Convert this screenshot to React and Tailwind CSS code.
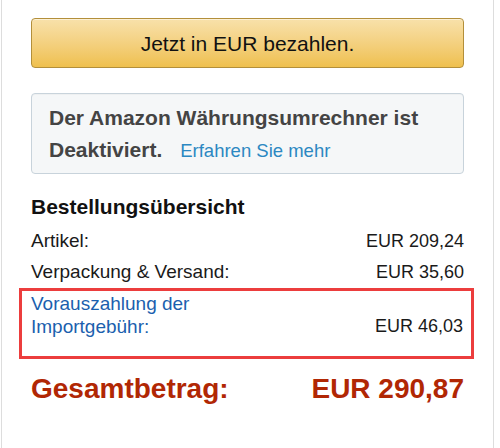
export default function App() {
  return (
    <div className="w-[500px] h-[448px] bg-white overflow-hidden" style={{ fontFamily: '"Liberation Sans", Arial, Helvetica, sans-serif' }}>
      <div className="ml-[1px] w-[493px] h-full border-x border-[#dddddd] px-[29px] pt-[18px]">
        <button className="w-full h-[50px] rounded-[4px] border border-[#b38f3a] bg-gradient-to-b from-[#f8e1aa] to-[#efc04d] text-[21px] text-[#111] shadow-[inset_0_1px_0_rgba(255,255,255,0.5)] leading-none">
          Jetzt in EUR bezahlen.
        </button>

        <div className="mt-[25px] rounded-[4px] border border-[#c8d3db] bg-[#f5f7f8] pl-[17px] pr-[10px] pt-[8px] pb-[6px] shadow-[inset_0_1px_1px_rgba(0,0,0,0.03)]">
          <p className="text-[21px] leading-[32px] font-bold text-[#444]">
            Der Amazon Währungsumrechner ist Deaktiviert.
            <span className="ml-[18px] text-[18.5px] font-normal text-[#2c88c2]">Erfahren Sie mehr</span>
          </p>
        </div>

        <h2 className="mt-[19px] text-[21px] leading-[28px] font-bold text-[#111]">Bestellungsübersicht</h2>

        <div className="mt-[5px] text-[#1a1a1a]">
          <div className="flex justify-between items-center h-[31px]">
            <span className="text-[19px]">Artikel:</span>
            <span className="text-[18px]">EUR 209,24</span>
          </div>
          <div className="flex justify-between items-center h-[31px]">
            <span className="text-[19px]">Verpackung &amp; Versand:</span>
            <span className="text-[18px]">EUR 35,60</span>
          </div>
        </div>

        <div className="-ml-[12px] -mr-[10px] border-[3px] border-[#ec3d3d] pl-[9px] pr-[8px] pt-[1px] pb-[18px] flex justify-between items-end leading-[23px]">
          <span className="w-[220px] text-[19px] text-[#1b5fae]">Vorauszahlung der Importgebühr:</span>
          <span className="text-[18px] text-[#1a1a1a]">EUR 46,03</span>
        </div>

        <div className="mt-[13px] flex justify-between items-center h-[34px] font-bold text-[28px] text-[#b12704]">
          <span>Gesamtbetrag:</span>
          <span>EUR 290,87</span>
        </div>
      </div>
    </div>
  );
}
